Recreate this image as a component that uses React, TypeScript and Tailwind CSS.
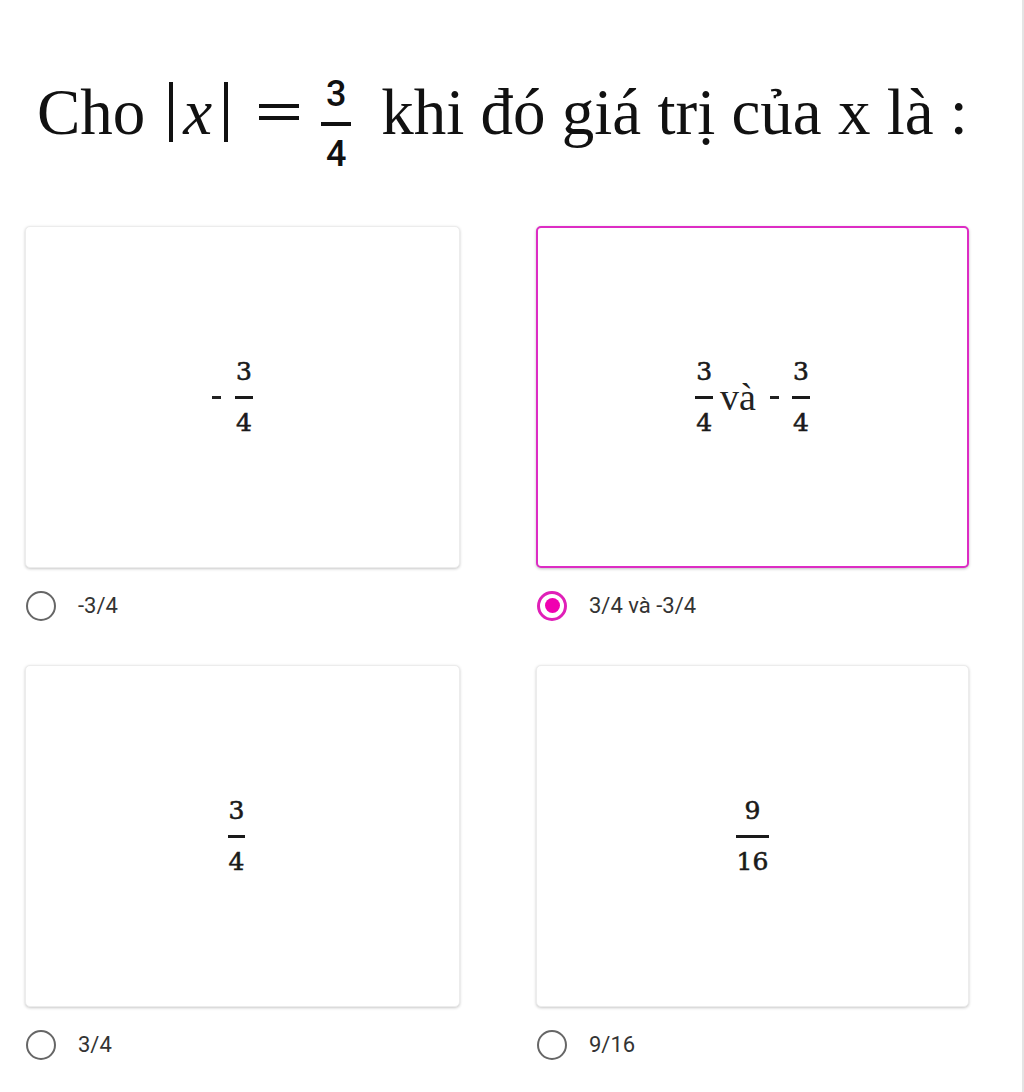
import React from "react";

const serif = { fontFamily: '"Liberation Serif", "Times New Roman", serif' };

function CardFrac({ n, d }: { n: string; d: string }) {
  return (
    <span
      className="inline-flex flex-col items-center text-[25px] font-normal text-[#1a1a1a] [-webkit-text-stroke:0.6px_#1a1a1a]"
      style={{ fontFamily: '"DejaVu Serif", "Liberation Serif", serif' }}
    >
      <span className="leading-none px-[1px]">{n}</span>
      <span className="block h-[3px] w-full bg-[#1a1a1a] mt-[12px] mb-[11px]" />
      <span className="leading-none px-[1px]">{d}</span>
    </span>
  );
}

function Radio({ checked }: { checked?: boolean }) {
  if (checked) {
    return (
      <span className="flex h-[30px] w-[30px] items-center justify-center rounded-full border-[3px] border-[#e020b8]">
        <span className="block h-[15px] w-[15px] rounded-full bg-[#f000b0]" />
      </span>
    );
  }
  return <span className="block h-[30px] w-[30px] rounded-full border-[2.5px] border-[#666]" />;
}

function Option({
  children,
  label,
  selected,
  wide,
}: {
  children: React.ReactNode;
  label: string;
  selected?: boolean;
  wide?: boolean;
}) {
  return (
    <div className="flex flex-col">
      <div
        className={`flex h-[342px] items-center justify-center rounded-[5px] bg-white ${
          selected
            ? "border-[2.5px] border-[#dd2cc4] shadow-[0_1px_3px_rgba(0,0,0,0.25)]"
            : "border border-[#ececec] shadow-[0_1px_3px_rgba(0,0,0,0.22)]"
        } ${wide ? "w-[433px]" : "w-[435px]"}`}
      >
        {children}
      </div>
      <div className="mt-[21px] flex items-center gap-[22px] pl-[1px]">
        <Radio checked={selected} />
        <span
          className="text-[22px] text-[#333]"
          style={{ fontFamily: 'Roboto, "Liberation Sans", sans-serif' }}
        >
          {label}
        </span>
      </div>
    </div>
  );
}

export default function App() {
  return (
    <div className="min-h-[1092px] w-[1024px] border-r-2 border-[#e4e4e4] bg-white">
      <div className="flex h-[226px] items-start pl-[37px] pt-[52px]">
        <div className="flex items-center text-[65px] leading-none text-[#111]" style={serif}>
          <span>Cho</span>
          <span className="ml-[24px] flex items-center">
            <span className="block h-[60px] w-[4px] bg-[#111]" />
            <span className="ml-[10px] mr-[12px] italic">x</span>
            <span className="block h-[60px] w-[4px] bg-[#111]" />
          </span>
          <span className="ml-[31px] flex flex-col gap-[8px]">
            <span className="block h-[4px] w-[40px] bg-[#111]" />
            <span className="block h-[4px] w-[40px] bg-[#111]" />
          </span>
          <span className="ml-[22px]">
            <span
              className="inline-flex flex-col items-center text-[36px] font-medium"
              style={{ fontFamily: 'Roboto, "Liberation Sans", sans-serif' }}
            >
              <span className="leading-none">3</span>
              <span className="my-[10px] block h-[4px] w-[30px] bg-[#111]" />
              <span className="leading-none">4</span>
            </span>
          </span>
          <span className="ml-[30px]">khi đó giá trị của x là :</span>
        </div>
      </div>

      <div className="grid grid-cols-[435px_433px] gap-x-[76px] gap-y-[43px] pl-[25px]">
        <Option label="-3/4">
          <span className="mr-[20px] flex items-center">
            <span className="mr-[14px] block h-[3px] w-[9px] bg-[#222]" />
            <CardFrac n="3" d="4" />
          </span>
        </Option>
        <Option label="3/4 và -3/4" selected wide>
          <span className="flex items-center">
            <CardFrac n="3" d="4" />
            <span className="ml-[7px] text-[38px] leading-none text-[#222]" style={serif}>
              và
            </span>
            <span className="ml-[14px] mr-[13px] block h-[3px] w-[9px] bg-[#222]" />
            <CardFrac n="3" d="4" />
          </span>
        </Option>
        <Option label="3/4">
          <span className="mr-[12px]">
            <CardFrac n="3" d="4" />
          </span>
        </Option>
        <Option label="9/16" wide>
          <CardFrac n="9" d="16" />
        </Option>
      </div>
    </div>
  );
}
